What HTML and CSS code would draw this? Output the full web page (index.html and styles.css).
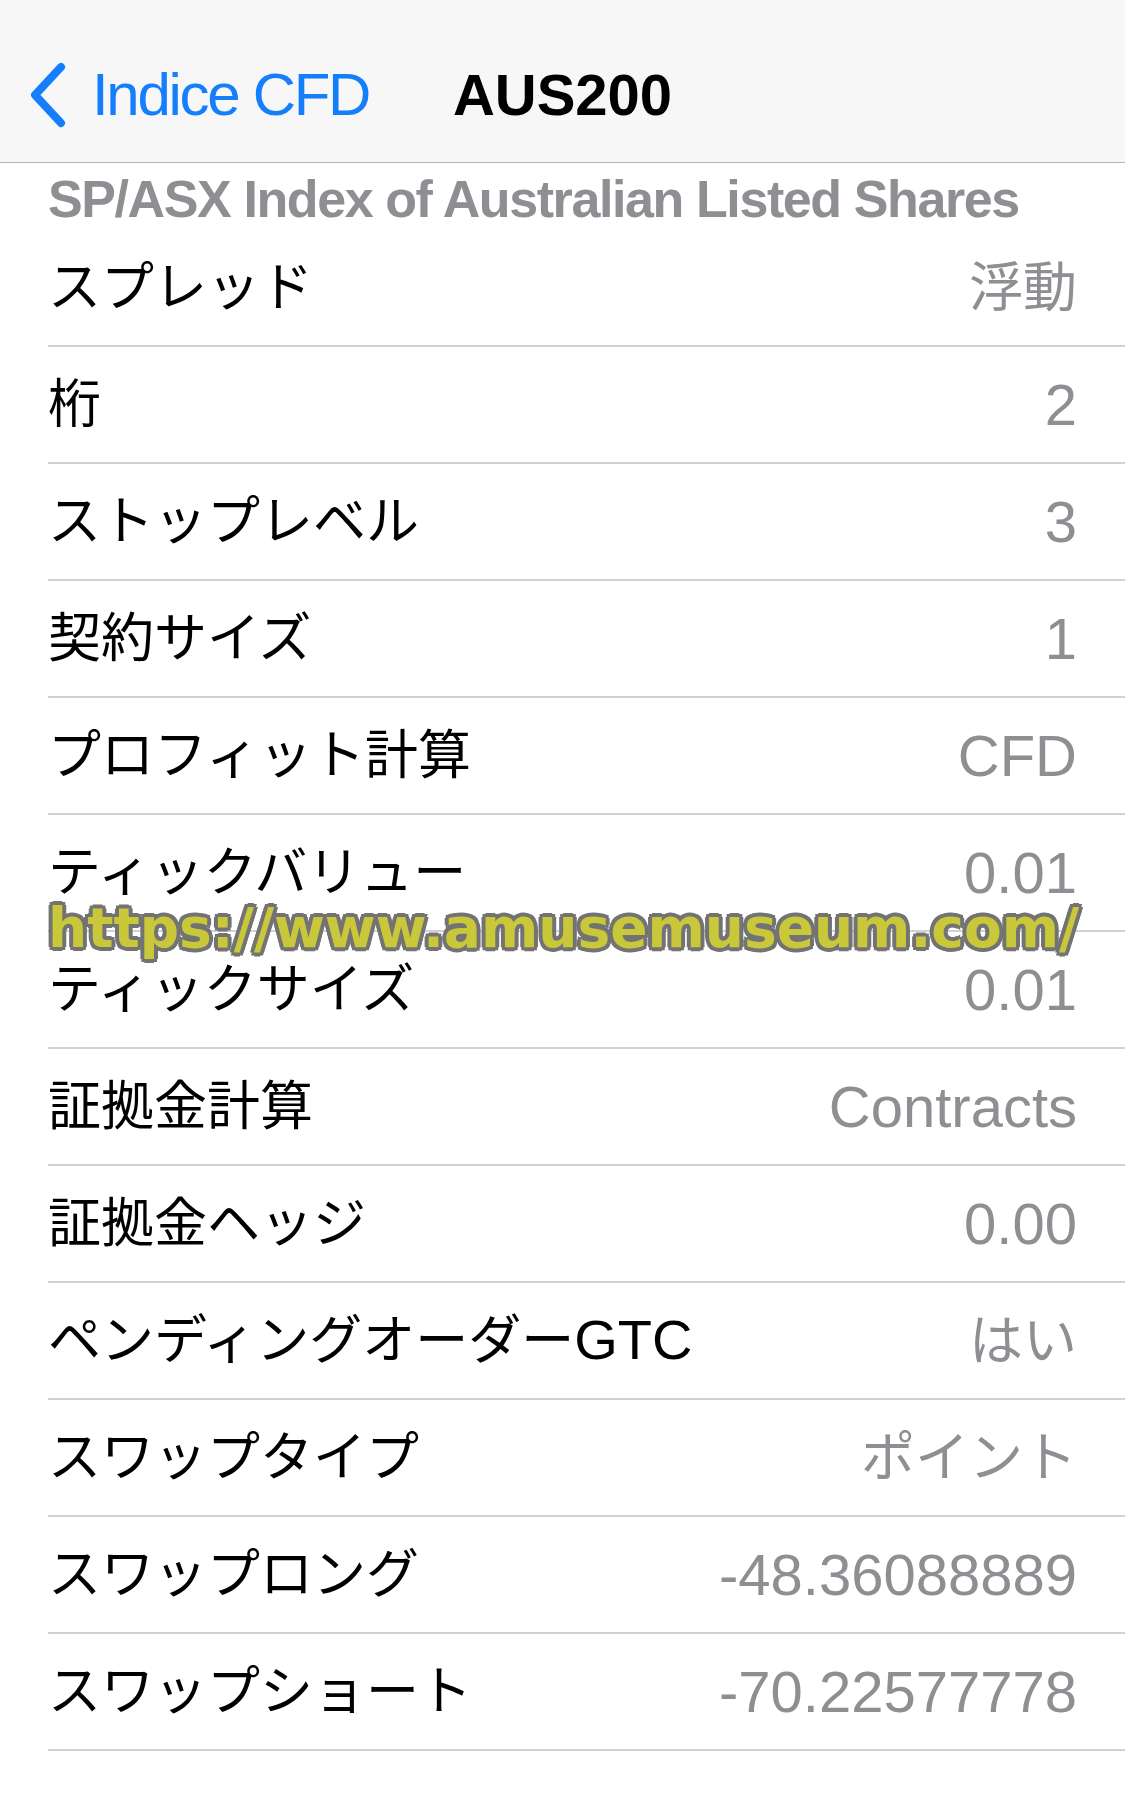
FILE: index.html
```html
<!DOCTYPE html>
<html lang="ja">
<head>
  <meta charset="UTF-8">
  <meta name="viewport" content="width=device-width, initial-scale=1.0">
  <title>AUS200</title>
  <link rel="stylesheet" href="styles.css">
</head>
<body>
  <div class="page">
    <div class="navbar">
      <div class="back">
        <svg class="chevron" width="40" height="66" viewBox="0 0 40 66">
          <polyline points="33,5 7,33 33,61" fill="none" stroke="currentColor" stroke-width="8" stroke-linecap="round" stroke-linejoin="round"/>
        </svg>
        <span class="back-label">Indice CFD</span>
      </div>
      <div class="title">AUS200</div>
      <div></div>
    </div>

    <div class="subtitle">SP/ASX Index of Australian Listed Shares</div>

    <ul class="spec-list">
      <li class="row"><span class="label">スプレッド</span><span class="value jp">浮動</span></li>
      <li class="row"><span class="label">桁</span><span class="value">2</span></li>
      <li class="row"><span class="label">ストップレベル</span><span class="value">3</span></li>
      <li class="row"><span class="label">契約サイズ</span><span class="value">1</span></li>
      <li class="row"><span class="label">プロフィット計算</span><span class="value">CFD</span></li>
      <li class="row"><span class="label">ティックバリュー</span><span class="value">0.01</span></li>
      <li class="row"><span class="label">ティックサイズ</span><span class="value">0.01</span></li>
      <li class="row"><span class="label">証拠金計算</span><span class="value">Contracts</span></li>
      <li class="row"><span class="label">証拠金ヘッジ</span><span class="value">0.00</span></li>
      <li class="row"><span class="label">ペンディングオーダー<span class="latin">GTC</span></span><span class="value jp">はい</span></li>
      <li class="row"><span class="label">スワップタイプ</span><span class="value jp">ポイント</span></li>
      <li class="row"><span class="label">スワップロング</span><span class="value">-48.36088889</span></li>
      <li class="row"><span class="label">スワップショート</span><span class="value">-70.22577778</span></li>
    </ul>

    <div class="watermark">https://www.amusemuseum.com/</div>
  </div>
</body>
</html>
```

FILE: styles.css
```css
body {
  margin: 0;
  background-color: #ffffff;
  font-family: "Liberation Sans", "Noto Sans CJK JP", sans-serif;
  color: #000000;
}
.page {
  position: relative;
  width: 1125px;
  min-height: 1803px;
}
.navbar {
  display: grid;
  grid-template-columns: 1fr auto 1fr;
  align-items: center;
  height: 135px;
  padding: 27px 28px 0;
  background-color: #f7f7f7;
  border-bottom: 1px solid #b4b4b4;
}
.back {
  display: flex;
  align-items: center;
  gap: 24px;
  color: #147efb;
}
.chevron {
  display: block;
}
.back-label {
  font-size: 60px;
  line-height: 1;
  letter-spacing: -2.3px;
}
.title {
  font-size: 58px;
  font-weight: bold;
  line-height: 1;
}
.subtitle {
  padding: 10px 48px 5px;
  font-size: 52px;
  font-weight: bold;
  line-height: 52px;
  letter-spacing: -1.4px;
  color: #8e8e93;
  white-space: nowrap;
}
.spec-list {
  list-style-type: none;
  margin: 0;
  padding: 0;
}
.row {
  display: flex;
  justify-content: space-between;
  align-items: center;
  height: 115px;
  margin-left: 48px;
  padding-right: 48px;
  border-bottom: 2px solid #d2d2d6;
}
.label {
  font-size: 53px;
  line-height: 70px;
  white-space: nowrap;
}
.label .latin {
  font-size: 56px;
}
.value {
  font-size: 58px;
  line-height: 70px;
  color: #8e8e93;
  white-space: nowrap;
}
.value.jp {
  font-size: 54px;
}
.watermark {
  position: absolute;
  left: 48px;
  top: 901px;
  font-family: "DejaVu Sans", sans-serif;
  font-weight: bold;
  font-size: 55px;
  line-height: 1;
  color: #c8c83a;
  white-space: nowrap;
  text-shadow: 4px 0 #737373, -4px 0 #737373, 0 4px #737373, 0 -4px #737373,
    3px 3px #737373, -3px 3px #737373, 3px -3px #737373, -3px -3px #737373;
}
```
